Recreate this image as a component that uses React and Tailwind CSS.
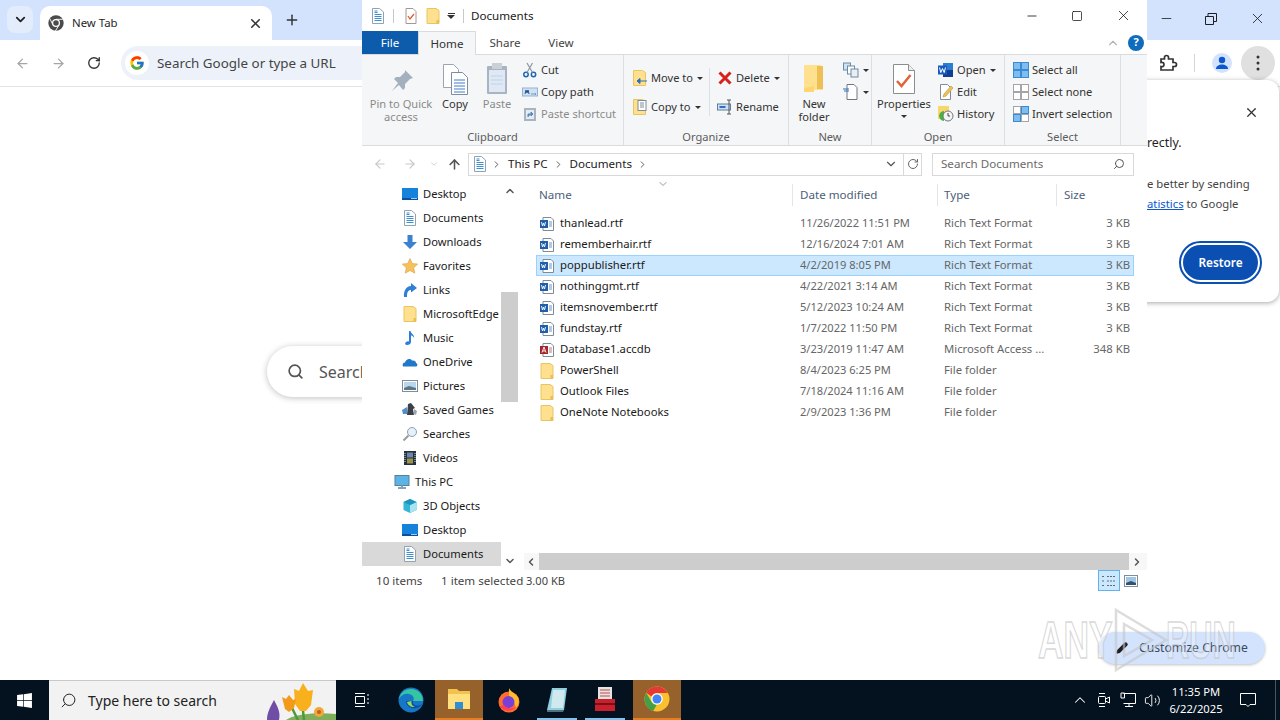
import React from 'react';
import { ArrowLeft, ArrowRight, ArrowUp, ChevronDown, ChevronLeft, ChevronRight, ChevronUp, Minus, Pencil, Plus, RotateCw, Search, Square, Volume2, X } from 'lucide-react';
import { FcGoogle } from 'react-icons/fc';
import { FaWindows } from 'react-icons/fa';

// --- file and shell icons, all on a 16x16 grid ---
const Svg = ({ size = 16, children, className = '' }) => (
  <svg width={size} height={size} viewBox="0 0 16 16" className={`shrink-0 ${className}`}>{children}</svg>
);

const DocIcon = ({ size = 16 }) => (
  <Svg size={size}>
    <path d="M2.500.5h7l4 3.500v11.500h-11z" fill="#fff" stroke="#8fa3b5" />
    <path d="M4.500 6.500h7M4.500 8.500h7M4.500 10.500h7M4.500 12.500h7" stroke="#3d8fd1" />
    <path d="M4.500 3h3M4.500 4.500h3" stroke="#3d8fd1" />
  </Svg>
);
const FolderIcon = ({ size = 16 }) => (
  <Svg size={size}>
    <path d="M2 .5h9l3 2v13H2z" fill="#ffe08f" stroke="#e8c463" />
    <path d="M11.500 12H14v3.500h-2.500z" fill="#e9bf55" />
  </Svg>
);
const WordFile = () => (
  <Svg>
    <path d="M4 1.500h8l2.500 2.500v10.500H4z" fill="#fff" stroke="#7d8a98" />
    <path d="M10 6h3M10 8h3M10 10h3" stroke="#6b93c4" />
    <rect x="1" y="4" width="8" height="8" fill="#1e5eab" />
    <path d="M2.500 6l1 4 1-3 1 3 1-4" fill="none" stroke="#fff" strokeWidth=".9" />
  </Svg>
);
const AccessFile = () => (
  <Svg>
    <path d="M4 1.500h8l2.500 2.500v10.500H4z" fill="#fff" stroke="#7d8a98" />
    <path d="M10 6h3M10 8h3M10 10h3" stroke="#b97a7a" />
    <rect x="1" y="4" width="8" height="8" fill="#a4262c" />
    <path d="M3 10.500l2-5.500 2 5.500M3.700 9h2.600" fill="none" stroke="#fff" strokeWidth=".9" />
  </Svg>
);
const DesktopIcon = () => (
  <Svg>
    <rect x="0" y="2" width="16" height="12" fill="#1583dc" />
    <path d="M0 12h16v2H0z" fill="#0a4f9c" />
    <path d="M9 12.500h6" stroke="#9fd0f5" />
  </Svg>
);
const DownloadIcon = () => (
  <Svg><path d="M5.500 1h5v7H15l-7 7-7-7h4.500z" fill="#3a82d0" /></Svg>
);
const StarIcon = () => (
  <Svg><path d="M8 .5l2.300 5 5.400.6-4 3.700 1.100 5.400L8 12.500l-4.800 2.700 1.100-5.400-4-3.700 5.400-.6z" fill="#f6c15d" stroke="#d99f45" strokeWidth=".6" /></Svg>
);
const LinksIcon = () => (
  <Svg><path d="M9 1l6 5-6 4.500V8C6 8 5 10 5 15H2C1.500 9 4 4.500 9 4z" fill="#2f7fd4" /></Svg>
);
const MusicIcon = () => (
  <Svg><path d="M7 1h1.500c.5 3 4 3.500 3.500 7-1-2-2-2.500-3-2.500V12c0 2-2 3-4 3s-2.500-2-1-3 2-.8 3-.5z" fill="#2b7fd6" /></Svg>
);
const CloudIcon = () => (
  <Svg><path d="M1 12.500c-1-2 0-4 2-4 1-3.500 5-4.500 7-2 2.500-.5 4 .8 4 2.500 1.500.3 2 2.500.5 3.500z" fill="#1f78c8" /></Svg>
);
const PicturesIcon = () => (
  <Svg>
    <rect x=".5" y="2.500" width="15" height="11" fill="#fff" stroke="#7f8c99" />
    <rect x="2" y="4" width="12" height="8" fill="#b9d6ee" />
    <path d="M2 10l5-2 7 2v2H2z" fill="#5e7583" />
  </Svg>
);
const GamesIcon = () => (
  <Svg>
    <path d="M0 8l5-3v7H1z" fill="#4e8fd0" />
    <path d="M6 2l3-1 4 5-2 1 1 6H5z" fill="#3c3f45" />
    <path d="M12 7l3 2-1 4-2-1z" fill="#9aa5b0" />
  </Svg>
);
const SearchesIcon = () => (
  <Svg>
    <circle cx="10" cy="6" r="4.500" fill="#e5f0f9" stroke="#8aa0b3" />
    <path d="M6.500 9.500L1.500 14.500" stroke="#9a9a9a" strokeWidth="2" />
  </Svg>
);
const VideosIcon = () => (
  <Svg>
    <rect x="2" y="1" width="12" height="14" fill="#26303a" />
    <rect x="5" y="2.500" width="6" height="5" fill="#6a87a8" />
    <rect x="5" y="8.500" width="6" height="5" fill="#9d9150" />
    <path d="M3 3v10M13 3v10" stroke="#cfd6dc" strokeDasharray="1 1" />
  </Svg>
);
const PcIcon = () => (
  <Svg>
    <rect x="1" y="1.500" width="14" height="10" fill="#5ab4e6" stroke="#5a7f99" />
    <path d="M4 14h8" stroke="#8aa0b3" strokeWidth="2" />
    <path d="M7 11.500h2V13H7z" fill="#8aa0b3" />
  </Svg>
);
const CubeIcon = () => (
  <Svg>
    <path d="M8 1l6.500 3v8L8 15l-6.500-3V4z" fill="#35b5d8" />
    <path d="M8 7l6.500-3v8L8 15z" fill="#a8e3ee" />
    <path d="M1.500 4L8 1l6.500 3L8 7z" fill="#1d93bd" />
  </Svg>
);

// --- ribbon icons ---
const RibbonImg = ({ children }) => (
  <svg width="36" height="36" viewBox="0 0 36 36" className="shrink-0">{children}</svg>
);
const PinIcon = () => (
  <RibbonImg>
    <path d="M22 9l8 8-3 1-5 5v4l-2 2-4-5-7 6 6-8-4-4 2-2h4l5-5z" fill="#a4b0be" />
  </RibbonImg>
);
const CopyIcon = () => (
  <RibbonImg>
    <path d="M6.500 3.500h10l5 5v18h-15z" fill="#fff" stroke="#9aa5b1" />
    <path d="M14.500 11.500h11l5 5v17h-16z" fill="#fff" stroke="#7f8c99" />
    <path d="M17 19h11M17 22h11M17 25h11M17 28h11M17 31h11" stroke="#3d7cc9" />
  </RibbonImg>
);
const PasteIcon = () => (
  <RibbonImg>
    <rect x="8" y="5" width="20" height="28" rx="1" fill="#a8b4c0" />
    <rect x="10" y="9" width="16" height="22" fill="#dfe8f4" />
    <rect x="13" y="2" width="10" height="6" fill="#c9d0d8" />
    <path d="M12 15h12M12 19h12M12 23h12" stroke="#c0d2e6" />
  </RibbonImg>
);
const NewFolderIcon = () => (
  <RibbonImg>
    <path d="M8 4h16l3 3v22H8z" fill="#ffe08f" />
    <path d="M21 5h6v23h-6z" fill="#eebf55" />
    <path d="M8 27l10-2v6H8z" fill="#ffd56e" />
  </RibbonImg>
);
const PropertiesIcon = () => (
  <RibbonImg>
    <path d="M7.500 3.500h15l6 6v23h-21z" fill="#fff" stroke="#8d8d8d" />
    <path d="M22.500 3.500v6h6" fill="#eee" stroke="#8d8d8d" />
    <path d="M11 20l4.500 5 9-11" fill="none" stroke="#e2643a" strokeWidth="2.500" />
  </RibbonImg>
);
const SmallDocCheck = () => (
  <Svg>
    <path d="M3 .5h7l3 3v12H3z" fill="#fff" stroke="#a3988f" />
    <path d="M5 8l2 3 4-5" fill="none" stroke="#dd5a34" strokeWidth="1.300" />
  </Svg>
);
const ScissorsIcon = () => (
  <Svg>
    <circle cx="4" cy="12.500" r="2.200" fill="none" stroke="#1f66b5" strokeWidth="1.500" />
    <circle cx="11.500" cy="12.500" r="2.200" fill="none" stroke="#1f66b5" strokeWidth="1.500" />
    <path d="M5 10.500L10.500 1M10.500 10.500L5 1" stroke="#8a97a5" strokeWidth="1.200" />
  </Svg>
);
const CopyPathIcon = () => (
  <Svg>
    <rect x=".5" y="4" width="15" height="8" fill="#cfe2f5" stroke="#8fb3d6" />
    <path d="M3 10l1-4 1 3 1-3 1 4" fill="none" stroke="#28527f" />
    <path d="M9.500 10h1M11.500 10h1M13 10h1" stroke="#28527f" />
  </Svg>
);
const ShortcutIcon = () => (
  <Svg>
    <rect x="2" y="2" width="12" height="13" fill="#a8b4c0" />
    <rect x="4" y="4" width="8" height="9" fill="#e3ebf4" />
    <path d="M6 11V8h3M9 6l2 2-2 2z" fill="#5c86b4" stroke="#5c86b4" />
  </Svg>
);
const MoveToIcon = () => (
  <Svg>
    <path d="M1.500.5h9l3 2v13h-12z" fill="#ffe08f" stroke="#e8c463" />
    <path d="M15 11H8M8 8.500L5 11l3 2.500z" fill="#2f6fbb" stroke="#2f6fbb" />
  </Svg>
);
const CopyToIcon = () => (
  <Svg>
    <path d="M1.500.5h9l3 2v13h-12z" fill="#ffe08f" stroke="#e8c463" />
    <rect x="6" y="1.500" width="8" height="10" fill="#fff" stroke="#7f8c99" />
    <path d="M8 4h4M8 6h4M8 8h4" stroke="#7f8c99" />
  </Svg>
);
const DeleteIcon = () => (
  <Svg><path d="M2.500 2.500l11 11M13.500 2.500l-11 11" stroke="#d5231c" strokeWidth="3" /></Svg>
);
const RenameIcon = () => (
  <Svg>
    <rect x=".5" y="5" width="13" height="6" fill="#cfe2f5" stroke="#5e7f9f" />
    <path d="M2.500 8h6" stroke="#2f6fbb" strokeWidth="2" />
    <path d="M12 1v14M10 1h4M10 15h4" stroke="#555" />
  </Svg>
);
const NewItemIcon = () => (
  <Svg>
    <rect x=".5" y="1" width="7" height="7" fill="#cfe2f5" stroke="#6d8aa5" />
    <rect x="4.500" y="4" width="7" height="8" fill="#fff" stroke="#6d8aa5" />
    <rect x="8" y="7" width="7" height="8" fill="#e9eef3" stroke="#6d8aa5" />
  </Svg>
);
const EasyAccessIcon = () => (
  <Svg>
    <path d="M4 .5h7l3 3v12H4z" fill="#fff" stroke="#6d7885" />
    <path d="M0 5h6M1 7h5" stroke="#2f6fbb" />
  </Svg>
);
const WordOpenIcon = () => (
  <Svg>
    <path d="M5 1h10v14H5z" fill="#2b7cd3" />
    <path d="M5 8h10v7H5z" fill="#103f91" />
    <rect x="0" y="3.500" width="9" height="9" fill="#185abd" />
    <path d="M1.500 5.500l1.300 5 1.700-4 1.700 4 1.300-5" fill="none" stroke="#fff" strokeWidth="1" />
  </Svg>
);
const EditIcon = () => (
  <Svg>
    <path d="M2.500.5h7l3 3v12h-10z" fill="#fff" stroke="#7f8c99" />
    <path d="M5 13l1-3 7-8 2 2-7 8z" fill="#ecc25c" stroke="#b89334" strokeWidth=".6" />
  </Svg>
);
const HistoryIcon = () => (
  <Svg>
    <rect x="0" y="0" width="11" height="13" fill="#f6d76b" />
    <path d="M1 10a6 6 0 0 1 5-5v10a6 6 0 0 1-5-5z" fill="#4caf3f" />
    <circle cx="10" cy="10" r="5" fill="#f4f4f4" stroke="#6d7885" />
    <path d="M10 7v3h2" fill="none" stroke="#444" />
  </Svg>
);
const GridIcon = ({ on = [] }) => (
  <Svg>
    {[[0, 0], [8, 0], [0, 8], [8, 8]].map(([x, y], i) => (
      <rect key={i} x={x + 0.5} y={y + 0.5} width="7" height="7" fill={on.includes(i) ? '#7fbdf0' : '#fff'} stroke={on.includes(i) ? '#3b8ad4' : '#a5a5a5'} />
    ))}
  </Svg>
);

// --- taskbar logos ---
const EdgeIcon = () => (
  <svg width="26" height="26" viewBox="0 0 26 26">
    <circle cx="13" cy="13" r="12.500" fill="#1677c9" />
    <path d="M25 14c0-7-5-12-12-12C7 2 2 6 1 12c2-4 6-6 10-5 4 1 6 4 4 7h10z" fill="#36c5a2" />
    <path d="M8 14c0 5 5 8 10 7 3-.6 5-2 6.500-4-3 2-6 2-8 1-2-1-2-3-1-4z" fill="#0f4c9c" />
    <path d="M9 15c1 4 5 5.500 8 5-3-1-4-3-3.500-6z" fill="#8ddf5b" />
  </svg>
);
const ExplorerTaskIcon = () => (
  <svg width="24" height="22" viewBox="0 0 24 22">
    <path d="M1 1h9l2 2h11v18H1z" fill="#f2c24f" />
    <path d="M1 6h22v15H1z" fill="#ffdf7e" />
    <rect x="8" y="14" width="8" height="7" fill="#2f8fd6" />
  </svg>
);
const FirefoxIcon = () => (
  <svg width="24" height="26" viewBox="0 0 24 26">
    <circle cx="12" cy="15" r="10.500" fill="#ff6d2e" />
    <path d="M12 1c1 3 5 5 8 8 3 4 2 9-1 12-1-6-4-8-7-9z" fill="#ffbd2e" />
    <circle cx="11.500" cy="15" r="6" fill="#7a3fd6" />
    <path d="M3 19c3 5 11 7 16 1-4 2-9 2-12-2z" fill="#ff3d55" />
  </svg>
);
const NotepadIcon = () => (
  <svg width="24" height="28" viewBox="0 0 24 28">
    <path d="M7 2h15l-3 22H2z" fill="#8fd0e0" />
    <path d="M8 4h12l-2 18H6z" fill="#cfe9ee" />
    <path d="M2 24h17l-1 2H2z" fill="#54707c" />
  </svg>
);
const ToolboxIcon = () => (
  <svg width="24" height="28" viewBox="0 0 24 28">
    <rect x="5" y="1" width="14" height="15" fill="#e4e4e4" />
    <path d="M7 4h10M7 7h10M7 10h10" stroke="#c24b4b" />
    <path d="M2 13h20v12H2z" fill="#c8202c" />
    <path d="M2 18h20" stroke="#7c0f16" strokeWidth="2" />
  </svg>
);
const ChromeLogo = ({ size = 26 }) => (
  <svg width={size} height={size} viewBox="0 0 26 26">
    <circle cx="13" cy="13" r="12.500" fill="#fbc02d" />
    <path d="M13 .5A12.500 12.500 0 0 1 23.800 7H13a6 6 0 0 0-5.500 3.500L2.200 6.800A12.500 12.500 0 0 1 13 .5z" fill="#e53935" />
    <path d="M2.200 6.800l5.400 9.200a6 6 0 0 0 5 3l-3.400 6A12.500 12.500 0 0 1 2.200 6.800z" fill="#43a047" />
    <circle cx="13" cy="13" r="5.800" fill="#fff" />
    <circle cx="13" cy="13" r="4.500" fill="#4285f4" />
  </svg>
);
const TabChrome = () => (
  <svg width="16" height="16" viewBox="0 0 26 26">
    <circle cx="13" cy="13" r="12.500" fill="#4a4a4a" />
    <path d="M13 7h11M8 16L3 6M18 16l-6 10" stroke="#fff" strokeWidth="1.500" />
    <circle cx="13" cy="13" r="6.500" fill="#fff" />
    <circle cx="13" cy="13" r="4.500" fill="#4a4a4a" />
  </svg>
);
const PuzzleIcon = () => (
  <svg width="20" height="20" viewBox="0 0 20 20" fill="none" stroke="#333" strokeWidth="1.700">
    <path d="M3 6h3.500V4.500a2 2 0 0 1 4 0V6H15v3.500h1.500a2 2 0 0 1 0 4H15V17H3v-3.500c2 .5 3-.5 3-2s-1-2.500-3-2z" />
  </svg>
);
const Flowers = () => (
  <svg width="72" height="39" viewBox="0 0 72 39">
    <path d="M22 39c8-6 30-8 50-6v6z" fill="#7faf5a" />
    <path d="M3 39c0-8 4-14 7-20 3 6 7 12 5 20z" fill="#6f4ea6" />
    <path d="M40 39l-2-18M34 39l-7-14" stroke="#4f9a3a" strokeWidth="2.500" />
    <path d="M30 8l5 2 4-8 5 8 5-1-2 15-5 6h-6l-5-7z" fill="#f8b01d" />
    <path d="M18 16l4 2 3-4 4 5 3-1-2 9-5 4-4-3z" fill="#f39a1a" />
    <circle cx="55" cy="31" r="5" fill="#f5a53a" />
    <circle cx="55" cy="31" r="2" fill="#b9651f" />
  </svg>
);
const WatermarkMark = () => (
  <svg width="62" height="64" viewBox="0 0 62 64" fill="none" stroke="#c4c4c4" strokeOpacity=".6" strokeWidth="2.500" className="shrink-0">
    <path d="M6 2l50 30-50 30z" />
    <path d="M14 16l28 16-28 16z" />
  </svg>
);

// --- data ---
const files = [
  ['thanlead.rtf', '11/26/2022 11:51 PM', 'Rich Text Format', '3 KB', WordFile],
  ['rememberhair.rtf', '12/16/2024 7:01 AM', 'Rich Text Format', '3 KB', WordFile],
  ['poppublisher.rtf', '4/2/2019 8:05 PM', 'Rich Text Format', '3 KB', WordFile, true],
  ['nothinggmt.rtf', '4/22/2021 3:14 AM', 'Rich Text Format', '3 KB', WordFile],
  ['itemsnovember.rtf', '5/12/2023 10:24 AM', 'Rich Text Format', '3 KB', WordFile],
  ['fundstay.rtf', '1/7/2022 11:50 PM', 'Rich Text Format', '3 KB', WordFile],
  ['Database1.accdb', '3/23/2019 11:47 AM', 'Microsoft Access ...', '348 KB', AccessFile],
  ['PowerShell', '8/4/2023 6:25 PM', 'File folder', '', FolderIcon],
  ['Outlook Files', '7/18/2024 11:16 AM', 'File folder', '', FolderIcon],
  ['OneNote Notebooks', '2/9/2023 1:36 PM', 'File folder', '', FolderIcon],
];

const navItems = [
  ['Desktop', DesktopIcon], ['Documents', DocIcon], ['Downloads', DownloadIcon], ['Favorites', StarIcon],
  ['Links', LinksIcon], ['MicrosoftEdge', FolderIcon], ['Music', MusicIcon], ['OneDrive', CloudIcon],
  ['Pictures', PicturesIcon], ['Saved Games', GamesIcon], ['Searches', SearchesIcon], ['Videos', VideosIcon],
  ['This PC', PcIcon, 'top'], ['3D Objects', CubeIcon], ['Desktop', DesktopIcon], ['Documents', DocIcon, 'sel'],
];

const Caret = ({ className = 'ml-1' }) => <span className={`inline-block border-x-[3px] border-t-[3px] border-x-transparent border-t-[#333] ${className}`} />;

function RibbonGroup({ label, width, children }) {
  return (
    <div style={{ width }} className="flex h-full shrink-0 flex-col border-r border-[#dcdfe3]">
      <div className="flex h-[74px] items-start pt-[5px]">{children}</div>
      <div className="text-center leading-[16px] text-[#5c5c5c]">{label}</div>
    </div>
  );
}

function BigBtn({ icon, lines, width, muted, caret }) {
  return (
    <div style={{ width }} className={`flex shrink-0 flex-col items-center text-center leading-[13px] ${muted ? 'text-[#8a8a8a]' : 'text-[#333]'}`}>
      <div className="mb-[-1px] flex h-[38px] items-center">{icon}</div>
      {lines.map((l) => <div key={l} className="whitespace-nowrap">{l}</div>)}
      {caret && <Caret className="mt-[5px]" />}
    </div>
  );
}

function SmallBtn({ icon, label, muted, caret }) {
  return (
    <div className={`flex h-[22px] items-center gap-[3px] whitespace-nowrap ${muted ? 'text-[#8a8a8a]' : 'text-[#333]'}`}>
      {icon}
      <span>{label}</span>
      {caret && <Caret className="ml-px" />}
    </div>
  );
}

function Explorer() {
  return (
    <div className="absolute left-[362px] top-0 z-10 flex h-[596px] w-[785px] flex-col bg-white text-[11.6px] text-[#1a1a1a]">
      {/* title bar */}
      <div className="flex h-[31px] shrink-0 items-center pl-2">
        <DocIcon />
        <div className="ml-[7px] h-[14px] w-px bg-[#c8c8c8]" />
        <div className="ml-[9px]"><SmallDocCheck /></div>
        <div className="ml-[6px]"><FolderIcon /></div>
        <div className="ml-[6px] flex flex-col items-center gap-[1px]">
          <div className="h-px w-[7px] bg-[#333]" />
          <div className="border-x-[4px] border-t-[4px] border-x-transparent border-t-[#333]" />
        </div>
        <div className="ml-2 h-[14px] w-px bg-[#c8c8c8]" />
        <span className="ml-[7px] text-[#222]">Documents</span>
        <div className="ml-auto flex items-center">
          <div className="flex w-[46px] justify-center"><Minus size={14} strokeWidth={1.3} className="text-black" /></div>
          <div className="flex w-[46px] -translate-x-px justify-center"><Square size={12} strokeWidth={1.4} className="text-black" /></div>
          <div className="flex w-[46px] -translate-x-px justify-center"><X size={17} strokeWidth={1} className="text-black" /></div>
        </div>
      </div>

      {/* tabs */}
      <div className="flex h-[23px] shrink-0 items-stretch">
        <div className="flex w-[56px] items-center justify-center bg-[#0c5cab] text-white">File</div>
        <div className="z-10 flex h-[24px] w-[58px] items-center justify-center border-x border-t border-[#dadbdc] bg-[#f5f6f7] text-[#333]">Home</div>
        <div className="flex w-[58px] items-center justify-center text-[#444]">Share</div>
        <div className="flex w-[54px] items-center justify-center text-[#444]">View</div>
        <div className="ml-auto flex items-center gap-[8px] pr-[3px]">
          <ChevronUp size={14} className="text-[#b5b5b5]" />
          <div className="flex h-4 w-4 items-center justify-center rounded-full bg-[#0f6cbd] text-[11px] font-bold text-white">?</div>
        </div>
      </div>

      {/* ribbon */}
      <div className="flex h-[92px] w-full shrink-0 border-y border-[#dadbdc] bg-[#f5f6f7] text-[11.1px]">
        <RibbonGroup label="Clipboard" width={262}>
          <div className="w-[7px] shrink-0" />
          <BigBtn icon={<PinIcon />} lines={['Pin to Quick', 'access']} width={64} muted />
          <BigBtn icon={<CopyIcon />} lines={['Copy']} width={44} />
          <BigBtn icon={<PasteIcon />} lines={['Paste']} width={40} muted />
          <div className="-mt-px ml-[5px] flex flex-col">
            <SmallBtn icon={<ScissorsIcon />} label="Cut" />
            <SmallBtn icon={<CopyPathIcon />} label="Copy path" />
            <SmallBtn icon={<ShortcutIcon />} label="Paste shortcut" muted />
          </div>
        </RibbonGroup>
        <RibbonGroup label="Organize" width={165}>
          <div className="ml-[8px] flex w-[77px] shrink-0 flex-col gap-[7px] pt-[7px]">
            <SmallBtn icon={<MoveToIcon />} label="Move to" caret />
            <SmallBtn icon={<CopyToIcon />} label="Copy to" caret />
          </div>
          <div className="mt-[8px] h-[48px] w-px bg-[#dcdfe3]" />
          <div className="ml-[7px] flex flex-col gap-[7px] pt-[7px]">
            <SmallBtn icon={<DeleteIcon />} label="Delete" caret />
            <SmallBtn icon={<RenameIcon />} label="Rename" />
          </div>
        </RibbonGroup>
        <RibbonGroup label="New" width={83}>
          <div className="pl-[2px]"><BigBtn icon={<NewFolderIcon />} lines={['New', 'folder']} width={46} /></div>
          <div className="-mt-px ml-[6px] flex flex-col">
            <div className="flex h-[22px] items-center"><NewItemIcon /><Caret /></div>
            <div className="flex h-[22px] items-center"><EasyAccessIcon /><Caret /></div>
          </div>
        </RibbonGroup>
        <RibbonGroup label="Open" width={133}>
          <div className="pl-[3px]"><BigBtn icon={<PropertiesIcon />} lines={['Properties']} width={58} caret /></div>
          <div className="-mt-px ml-[5px] flex flex-col">
            <SmallBtn icon={<WordOpenIcon />} label="Open" caret />
            <SmallBtn icon={<EditIcon />} label="Edit" />
            <SmallBtn icon={<HistoryIcon />} label="History" />
          </div>
        </RibbonGroup>
        <RibbonGroup label="Select" width={116}>
          <div className="-mt-px ml-[8px] flex flex-col">
            <SmallBtn icon={<GridIcon on={[0, 1, 2, 3]} />} label="Select all" />
            <SmallBtn icon={<GridIcon />} label="Select none" />
            <SmallBtn icon={<GridIcon on={[1, 2]} />} label="Invert selection" />
          </div>
        </RibbonGroup>
      </div>

      {/* address bar */}
      <div className="flex h-[34px] shrink-0 items-center pt-[2px]">
        <div className="ml-[11px] flex w-[95px] items-center text-[#c8c8c8]">
          <ArrowLeft size={14} />
          <ArrowRight size={14} className="ml-4" />
          <ChevronDown size={10} className="ml-3" />
          <ArrowUp size={15} strokeWidth={2.5} className="ml-2 text-[#555]" />
        </div>
        <div className="flex h-[23px] w-[454px] items-center border border-[#d9d9d9] pl-[3px] text-[#222]">
          <DocIcon />
          <ChevronRight size={11} className="ml-[3px] text-[#555]" />
          <span className="ml-[6px]">This PC</span>
          <ChevronRight size={11} className="ml-[5px] text-[#555]" />
          <span className="ml-[6px]">Documents</span>
          <ChevronRight size={11} className="ml-[5px] text-[#555]" />
          <ChevronDown size={14} className="ml-auto mr-[5px] text-[#555]" />
          <div className="flex h-full w-[18px] items-center justify-center border-l border-[#d9d9d9]">
            <RotateCw size={12} className="text-[#666]" />
          </div>
        </div>
        <div className="ml-[10px] flex h-[23px] w-[202px] items-center justify-between border border-[#d9d9d9] px-2 text-[#6b6b6b]">
          <span>Search Documents</span>
          <Search size={12} className="-scale-x-100 text-[#555]" />
        </div>
      </div>

      {/* body */}
      <div className="flex min-h-0 flex-1">
        <div className="flex w-[157px] shrink-0">
          <div className="w-[139px] overflow-hidden pt-[2px] text-[11.2px]">
            {navItems.map(([name, Icon, kind], i) => (
              <div key={i} className={`flex h-6 items-center gap-[5px] whitespace-nowrap ${kind === 'top' ? 'pl-[32px]' : 'pl-[40px]'} ${kind === 'sel' ? 'bg-[#d9d9d9]' : ''}`}>
                <Icon />
                <span>{name}</span>
              </div>
            ))}
          </div>
          <div className="flex w-[17px] shrink-0 flex-col items-center pt-[5px]">
            <ChevronUp size={12} strokeWidth={3} className="text-[#555]" />
            <div className="mt-[95px] h-[110px] w-full bg-[#cdcdcd]" />
            <ChevronDown size={12} strokeWidth={3} className="mt-[153px] text-[#555]" />
          </div>
        </div>
        <div className="flex min-w-0 flex-1 flex-col pl-[2px]">
          <div className="relative mx-[15px] grid h-[33px] shrink-0 grid-cols-[257px_145px_119px_1fr] pt-[4px] text-[#4c607a]">
            <div className="flex h-[22px] items-center border-r border-[#e5e5e5] pl-[3px]">Name</div>
            <div className="flex h-[22px] items-center border-r border-[#e5e5e5] pl-[7px]">Date modified</div>
            <div className="flex h-[22px] items-center border-r border-[#e5e5e5] pl-[6px]">Type</div>
            <div className="flex h-[22px] items-center pl-[7px]">Size</div>
            <ChevronDown size={12} className="absolute left-[121px] top-[-2px] text-[#9a9a9a]" />
          </div>
          <div className="mr-[13px] ml-[15px] min-h-0 flex-1 text-[11.3px]">
            {files.map(([name, date, type, size, Icon, sel]) => (
              <div key={name} className={`grid h-[21px] grid-cols-[263px_144px_117px_1fr] items-center border text-[#666] ${sel ? 'border-[#99d1ff] bg-[#cce8ff]' : 'border-transparent'}`}>
                <div className="flex items-center gap-[5px] whitespace-nowrap pl-[2px] text-[#1a1a1a]">
                  <Icon />
                  <span>{name}</span>
                </div>
                <div className="whitespace-nowrap text-[11.1px]">{date}</div>
                <div className="whitespace-nowrap">{type}</div>
                <div className="whitespace-nowrap pr-[3px] text-right">{size}</div>
              </div>
            ))}
          </div>
          <div className="ml-[3px] flex h-[17px] shrink-0 items-center bg-[#f7f7f7]">
            <ChevronLeft size={12} strokeWidth={3} className="ml-[1px] text-[#555]" />
            <div className="ml-[2px] h-full w-[590px] bg-[#cdcdcd]" />
            <ChevronRight size={12} strokeWidth={3} className="ml-[2px] text-[#555]" />
          </div>
        </div>
      </div>

      {/* status bar */}
      <div className="flex h-[26px] shrink-0 items-start pl-[14px] text-[#444]">
        <span className="w-[65px] leading-[21px]">10 items</span>
        <span className="w-[85px] whitespace-nowrap leading-[21px]">1 item selected</span>
        <span className="text-[11.1px] leading-[21px]">3.00 KB</span>
        <div className="ml-auto flex items-center gap-1 pr-[9px]">
          <div className="flex h-[21px] w-[22px] items-center justify-center border border-[#5fb1f0] bg-[#cce8ff]">
            <svg width="16" height="12" viewBox="0 0 16 12" stroke="#5a6b7a">
              <path d="M1 1.500h3M6 1.500h9M1 6h3M6 6h9M1 10.500h3M6 10.500h9" strokeDasharray="2 1" />
            </svg>
          </div>
          <svg width="14" height="12" viewBox="0 0 14 12">
            <rect x=".5" y=".5" width="13" height="11" fill="#fff" stroke="#7f8c99" />
            <rect x="2" y="2" width="10" height="8" fill="#9ec6e6" />
            <path d="M2 8l5-2 5 2v2H2z" fill="#33516a" />
          </svg>
        </div>
      </div>
    </div>
  );
}

function ChromeWindow() {
  return (
    <div className="relative flex h-[680px] flex-col bg-white text-[#1f1f1f]">
      <div className="flex h-10 shrink-0 items-end bg-[#d3e3fd]">
        <div className="mb-[7px] ml-[7px] flex h-[27px] w-[26px] items-center justify-center rounded-lg bg-[#e3ecfb]">
          <ChevronDown size={15} strokeWidth={2.8} className="text-[#1f1f1f]" />
        </div>
        <div className="ml-[7px] flex h-[34px] w-[232px] items-center rounded-t-[10px] bg-white pl-2 pr-[9px]">
          <TabChrome />
          <span className="ml-2 text-[11.4px]">New Tab</span>
          <X size={15} strokeWidth={2.5} className="ml-auto text-[#333]" />
        </div>
        <Plus size={16} strokeWidth={2.2} className="mb-[12px] ml-3 text-[#333]" />
        <div className="mb-[13px] ml-auto flex items-center text-[#1f1f1f]">
          <Minus size={15} strokeWidth={1.3} className="mr-[31px]" />
          <svg width="12" height="12" viewBox="0 0 12 12" fill="none" stroke="#1f1f1f" className="mr-[32px]">
            <path d="M.5 3.500h8v8h-8zM3 3.500V.5h8.500v8H8.500" />
          </svg>
          <X size={17} strokeWidth={1.2} className="mr-[14px]" />
        </div>
      </div>
      <div className="flex h-[47px] shrink-0 items-center rounded-t-lg border-b border-[#e3e3e3] bg-white pl-[15px]">
        <ArrowLeft size={15} className="text-[#a5a5a5]" />
        <ArrowRight size={15} className="ml-[21px] text-[#a5a5a5]" />
        <RotateCw size={14} strokeWidth={2.3} className="ml-[21px] text-[#333]" />
        <div className="ml-5 flex h-[34px] w-[1016px] shrink-0 items-center rounded-full bg-[#edf2fa] pl-[4px]">
          <div className="flex h-6 w-6 items-center justify-center rounded-full bg-white"><FcGoogle size={16} /></div>
          <span className="ml-[8px] whitespace-nowrap text-[13.4px] text-[#444]">Search Google or type a URL</span>
        </div>
        <div className="ml-[21px] flex items-center">
          <PuzzleIcon />
          <div className="ml-4 h-[18px] w-px bg-[#d5d5d5]" />
          <div className="ml-[17px] flex h-5 w-5 items-center justify-center overflow-hidden rounded-full bg-[#d3e3fd]">
            <svg width="14" height="14" viewBox="0 0 14 14" fill="#0b57d0">
              <circle cx="7" cy="4" r="3.200" />
              <path d="M1 13c0-3 3-4.500 6-4.500s6 1.500 6 4.500z" />
            </svg>
          </div>
          <div className="ml-[9px] flex h-[34px] w-[34px] items-center justify-center rounded-full bg-[#e0e0e0]">
            <svg width="4" height="16" viewBox="0 0 4 16" fill="#333">
              <circle cx="2" cy="2" r="1.500" /><circle cx="2" cy="8" r="1.500" /><circle cx="2" cy="14" r="1.500" />
            </svg>
          </div>
        </div>
      </div>

      {/* new tab page */}
      <div className="absolute left-[267px] top-[346px] flex h-[51px] w-[584px] items-center rounded-full bg-white pl-5 shadow-[0_1px_6px_rgba(32,33,36,0.28)]">
        <Search size={17} strokeWidth={2.4} className="text-[#555]" />
        <span className="ml-[15px] text-base text-[#555]">Search</span>
      </div>

      {/* restore pages bubble */}
      <div className="absolute left-[1100px] top-[80px] flex h-[222px] w-[179px] flex-col rounded-xl bg-white pl-[47px] text-[#1f1f1f] shadow-[0_1px_5px_rgba(0,0,0,0.35)]">
        <X size={15} strokeWidth={2} className="ml-[97px] mt-[25px] text-[#333]" />
        <div className="mt-[13px] text-[12.4px] leading-[20px]">rectly.</div>
        <div className="mt-[21px] whitespace-nowrap text-[11.3px] leading-[20px] text-[#444]">e better by sending</div>
        <div className="whitespace-nowrap text-[11.3px] leading-[20px] text-[#444]"><span className="text-[#0b57d0] underline">atistics</span> to Google</div>
        <div className="ml-[32px] mt-[27px] w-[83px] rounded-full border-2 border-[#0b4fb3] p-[2px]">
          <div className="flex h-[35px] items-center justify-center rounded-full bg-[#0b4fb3] text-[11.8px] font-semibold text-white">Restore</div>
        </div>
      </div>

      {/* customize chrome */}
      <div className="absolute left-[1099px] top-[632px] flex h-8 w-[166px] items-center rounded-full bg-[#d3e3fd] pl-[17px] shadow-[0_1px_3px_rgba(0,0,0,0.25)]">
        <Pencil size={12} strokeWidth={2.5} fill="#1f1f1f" className="text-[#1f1f1f]" />
        <span className="ml-[11px] whitespace-nowrap text-[12.2px] text-[#3a4a60]">Customize Chrome</span>
      </div>

      {/* any.run watermark */}
      <div className="pointer-events-none absolute left-[1038px] top-[608px] z-20 flex h-[64px] w-[200px] items-center font-['Liberation_Sans',sans-serif]">
        <span className="w-[72px] shrink-0 origin-left scale-x-[0.68] text-[52px] font-bold text-[rgba(255,255,255,0.25)] [-webkit-text-stroke:1.5px_rgba(190,190,190,0.6)]">ANY</span>
        <WatermarkMark />
        <span className="-ml-[6px] w-[68px] shrink-0 origin-left scale-x-[0.62] text-[52px] font-bold text-[rgba(255,255,255,0.25)] [-webkit-text-stroke:1.5px_rgba(190,190,190,0.6)]">RUN</span>
      </div>
    </div>
  );
}

function Taskbar() {
  return (
    <div className="relative z-30 flex h-10 shrink-0 items-stretch bg-[#04121f] text-white">
      <div className="flex w-[49px] items-center justify-center"><FaWindows size={17} /></div>
      <div className="flex w-[287px] items-center justify-between overflow-hidden border-t border-[#c8c8c8] bg-[#f2f2f2] pl-[11px]">
        <div className="flex items-center">
          <Search size={17} strokeWidth={1.4} className="-scale-x-100 text-[#222]" />
          <span className="ml-[11px] whitespace-nowrap text-[14px] text-[#222]">Type here to search</span>
        </div>
        <Flowers />
      </div>
      <div className="flex w-[51px] items-center justify-center">
        <svg width="16" height="16" viewBox="0 0 16 16" fill="none" stroke="#fff">
          <path d="M1.500 4.500h9v7h-9zM1 1.500h10M1 14.500h10M14 2v2M14 6v2M14 10v2" />
        </svg>
      </div>
      <div className="flex w-[48px] items-center justify-center"><EdgeIcon /></div>
      <div className="flex w-[48px] items-center justify-center border-b-2 border-[#e87e1e] bg-[#96612a]"><ExplorerTaskIcon /></div>
      <div className="ml-[2px] flex w-[48px] items-center justify-center"><FirefoxIcon /></div>
      <div className="flex w-[48px] flex-col items-center justify-end">
        <NotepadIcon />
        <div className="mt-[4px] h-[2px] w-10 bg-[#7fc4ee]" />
      </div>
      <div className="flex w-[48px] flex-col items-center justify-end">
        <ToolboxIcon />
        <div className="mt-[4px] h-[2px] w-10 bg-[#7fc4ee]" />
      </div>
      <div className="ml-1 flex w-[48px] items-center justify-center border-b-2 border-[#e87e1e] bg-[#96612a]"><ChromeLogo /></div>

      <div className="ml-auto flex items-center">
        <ChevronUp size={18} strokeWidth={1.4} className="mr-[7px]" />
        <svg width="16" height="18" viewBox="0 0 16 18" fill="none" stroke="#fff" className="mr-[8px]">
          <rect x="2.500" y="5.500" width="7" height="7" rx="1" />
          <path d="M9.500 8l4-2v6l-4-2M3 2.500h6M3 15.500h6" />
        </svg>
        <svg width="16" height="16" viewBox="0 0 16 16" fill="none" stroke="#fff" className="mr-[8px]">
          <path d="M3.500 1.500h12v10h-12M1 1v5h3.500V1zM9 11.500v3M5 14.500h8" />
        </svg>
        <Volume2 size={17} strokeWidth={1.3} />
        <div className="ml-[9px] flex w-[52px] flex-col items-center whitespace-nowrap text-[11.2px] leading-[17px]">
          <span>11:35 PM</span>
          <span>6/22/2025</span>
        </div>
        <svg width="16" height="16" viewBox="0 0 16 16" fill="none" stroke="#fff" className="ml-[18px] mr-[19px]">
          <path d="M.5 1.500h15v11H10l-2 2-2-2H.5z" />
        </svg>
        <div className="mr-[4px] h-full w-px bg-[#4a5560]" />
      </div>
    </div>
  );
}

export default function App() {
  return (
    <div className="relative flex h-[720px] w-[1280px] flex-col overflow-hidden bg-white font-['Noto_Sans',sans-serif]">
      <ChromeWindow />
      <Explorer />
      <Taskbar />
    </div>
  );
}
